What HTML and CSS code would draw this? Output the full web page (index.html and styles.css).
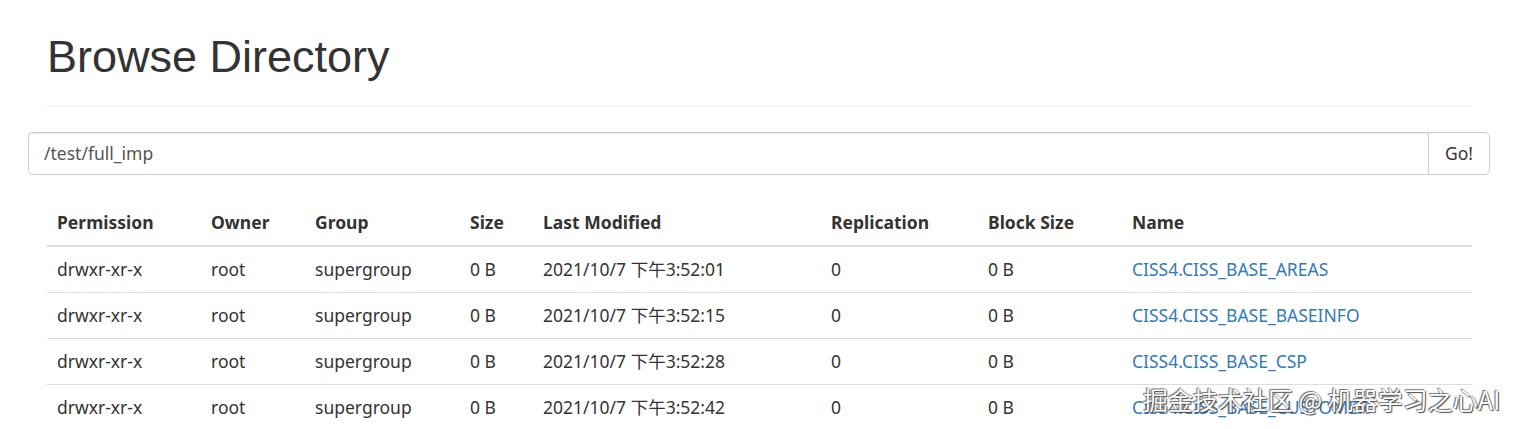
FILE: index.html
```html
<!DOCTYPE html>
<html>
<head>
<meta charset="utf-8">
<link rel="stylesheet" href="styles.css">
</head>
<body>
<div class="container">
  <div class="page-header">
    <h1>Browse Directory</h1>
  </div>
  <div class="input-group">
    <input class="path-input" type="text" value="/test/full_imp">
    <button class="go-btn">Go!</button>
  </div>
  <table class="listing">
    <colgroup>
      <col class="c1"><col class="c2"><col class="c3"><col class="c4"><col class="c5"><col class="c6"><col class="c7"><col class="c8">
    </colgroup>
    <thead>
      <tr><th>Permission</th><th>Owner</th><th>Group</th><th>Size</th><th>Last Modified</th><th>Replication</th><th>Block Size</th><th>Name</th></tr>
    </thead>
    <tbody>
      <tr><td>drwxr-xr-x</td><td>root</td><td>supergroup</td><td>0 B</td><td>2021/10/7 下午3:52:01</td><td>0</td><td>0 B</td><td><a href="#">CISS4.CISS_BASE_AREAS</a></td></tr>
      <tr><td>drwxr-xr-x</td><td>root</td><td>supergroup</td><td>0 B</td><td>2021/10/7 下午3:52:15</td><td>0</td><td>0 B</td><td><a href="#">CISS4.CISS_BASE_BASEINFO</a></td></tr>
      <tr><td>drwxr-xr-x</td><td>root</td><td>supergroup</td><td>0 B</td><td>2021/10/7 下午3:52:28</td><td>0</td><td>0 B</td><td><a href="#">CISS4.CISS_BASE_CSP</a></td></tr>
      <tr><td>drwxr-xr-x</td><td>root</td><td>supergroup</td><td>0 B</td><td>2021/10/7 下午3:52:42</td><td>0</td><td>0 B</td><td><a href="#">CISS4.CISS_BASE_CUSTOMER</a></td></tr>
    </tbody>
  </table>
</div>
<div class="watermark">掘金技术社区 @ 机器学习之心AI</div>
</body>
</html>
```
FILE: styles.css
```css
html, body {
  margin: 0;
  padding: 0;
  background: #fff;
  overflow: hidden;
}
body {
  font-family: "Noto Sans", "Noto Sans CJK SC", sans-serif;
  font-size: 17.5px;
  color: #333;
}
.container {
  width: 1463px;
  margin: 0 auto;
  padding: 0 18px 0 20px;
  box-sizing: border-box;
}
.page-header {
  border-bottom: 1px solid #eee;
  padding-bottom: 24px;
  margin-bottom: 25px;
}
.page-header h1 {
  margin: 0;
  padding-top: 32px;
  font-family: "Liberation Sans", Arial, sans-serif;
  font-weight: 400;
  font-size: 45px;
  line-height: 49.5px;
  color: #333;
}
.input-group {
  display: flex;
  margin: 0 -18px 0 -19px;
  height: 43px;
}
.path-input {
  flex: 1;
  min-width: 0;
  height: 43px;
  box-sizing: border-box;
  border: 1px solid #ccc;
  border-right: none;
  border-radius: 5px 0 0 5px;
  padding: 0 15px;
  font-family: "Noto Sans", "Noto Sans CJK SC", sans-serif;
  font-size: 17.5px;
  color: #555;
  outline: none;
  box-shadow: inset 0 1px 1px rgba(0,0,0,.075);
}
.go-btn {
  width: 62px;
  height: 43px;
  box-sizing: border-box;
  border: 1px solid #ccc;
  border-radius: 0 5px 5px 0;
  background: #fff;
  font-family: "Noto Sans", "Noto Sans CJK SC", sans-serif;
  font-size: 17.5px;
  color: #333;
  padding: 0;
}
.listing {
  width: 100%;
  margin-top: 25px;
  border-collapse: collapse;
  table-layout: fixed;
}
.c1 { width: 154px; }
.c2 { width: 104px; }
.c3 { width: 155px; }
.c4 { width: 73px; }
.c5 { width: 288px; }
.c6 { width: 157px; }
.c7 { width: 144px; }
.listing th, .listing td {
  text-align: left;
  padding: 10px;
  line-height: 25px;
  white-space: nowrap;
}
.listing th {
  font-weight: 700;
  border-bottom: 2.5px solid #ddd;
}
.listing td {
  border-top: 1px solid #ddd;
}
.listing a {
  color: #337ab7;
  text-decoration: none;
}
.watermark {
  position: absolute;
  left: 1143px;
  top: 384px;
  font-family: "Noto Sans CJK SC", sans-serif;
  font-size: 25px;
  line-height: 30px;
  color: #fff;
  text-shadow: 0 0 1px #555, 1px 1px 1px #444, -1px -1px 1px #777;
  white-space: nowrap;
}
```
